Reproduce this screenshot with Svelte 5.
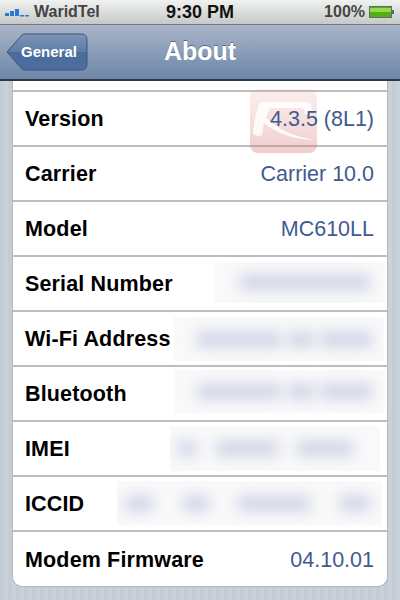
<script>
    const rows = [
        { label: 'Version', value: '4.3.5 (8L1)' },
        { label: 'Carrier', value: 'Carrier 10.0' },
        { label: 'Model', value: 'MC610LL' },
        { label: 'Serial Number', patch: 'serial', segs: [130] },
        { label: 'Wi-Fi Address', patch: 'wifi', segs: [84, 26, 52] },
        { label: 'Bluetooth', patch: 'bluetooth', segs: [84, 26, 52] },
        { label: 'IMEI', patch: 'imei', segs: [18, 62, 56] },
        { label: 'ICCID', patch: 'iccid', segs: [28, 26, 72, 30] },
        { label: 'Modem Firmware', value: '04.10.01' }
    ];
</script>

<div class="phone">
    <div class="status">
        <div class="carrier">
            <svg class="signal" width="26" height="10" viewBox="0 0 26 10">
                <rect x="0" y="6" width="4" height="3" fill="#2a78d8" />
                <rect x="5" y="4" width="4" height="5" fill="#2a78d8" />
                <rect x="10" y="2" width="4" height="7" fill="#2a78d8" />
                <rect x="15" y="8" width="4" height="1.5" fill="#2a78d8" />
                <rect x="20" y="8" width="4" height="1.5" fill="#2a78d8" />
            </svg>
            <span>WaridTel</span>
        </div>
        <div class="time">9:30 PM</div>
        <div class="battery">
            <span>100%</span>
            <svg width="26" height="12" viewBox="0 0 26 12">
                <rect x="0.5" y="0.5" width="22" height="11" fill="#ddd" stroke="#666" />
                <rect x="1" y="1" width="21" height="10" fill="#55ad18" />
                <rect x="1" y="2" width="21" height="4" fill="#8fdc4c" />
                <rect x="23" y="4" width="2" height="4" fill="#666" />
            </svg>
        </div>
    </div>

    <div class="nav">
        <div class="back">
            <svg class="back-shape" width="82" height="38" viewBox="0 0 82 38">
                <defs>
                    <linearGradient id="backfill" x1="0" y1="0" x2="0" y2="1">
                        <stop offset="0" stop-color="#7d96b8" />
                        <stop offset="0.5" stop-color="#5c7ca6" />
                        <stop offset="0.5" stop-color="#4a6c9c" />
                        <stop offset="1" stop-color="#4d6f9f" />
                    </linearGradient>
                </defs>
                <path d="M1 19 L16 2 Q17 1 19 1 L75 1 Q81 1 81 7 L81 31 Q81 37 75 37 L19 37 Q17 37 16 36 Z" fill="url(#backfill)" stroke="#3d5378" />
            </svg>
            <span>General</span>
        </div>
        <h1>About</h1>
    </div>

    <div class="content">
        <div class="card">
            <div class="stub"></div>
            {#each rows as row}
                <div class="row">
                    <span class="label">{row.label}</span>
                    {#if row.value}
                        <span class="value">{row.value}</span>
                    {/if}
                    {#if row.patch}
                        <div class="patch {row.patch}">
                            {#each row.segs as w}
                                <div class="smear" style="width: {w}px"></div>
                            {/each}
                        </div>
                    {/if}
                </div>
            {/each}
        </div>

        <div class="mark">
            <svg width="67" height="64" viewBox="0 0 67 64">
                <path d="M3 44 C4 32 6 22 10 13 L54 13 C62 13 64 18 60 25 L54 25 C56 21 54 19 50 19 L20 19 C18 23 17 26 16 29 C30 42 46 48 66 51 C44 51 26 44 14 34 C13 38 13 42 12 46 C8 48 5 47 3 44 Z" fill="#fff" opacity="0.85" />
            </svg>
        </div>
    </div>
</div>

<style>
    :global(body) {
        margin: 0;
    }

    .phone {
        width: 400px;
        height: 600px;
        overflow: hidden;
        font-family: "Liberation Sans", Arial, sans-serif;
        display: flex;
        flex-direction: column;
    }

    .status {
        height: 24px;
        flex: none;
        display: grid;
        grid-template-columns: 1fr auto 1fr;
        align-items: center;
        padding: 0 5px;
        background: linear-gradient(#f0f2f0, #c6c9c8);
        border-bottom: 1px solid #76797c;
        font-size: 16px;
        color: #444;
    }

    .carrier {
        display: flex;
        align-items: center;
        gap: 3px;
        font-weight: 700;
    }

    .time {
        color: #111;
        font-weight: 700;
        font-size: 18px;
    }

    .battery {
        display: flex;
        justify-content: flex-end;
        align-items: center;
        gap: 4px;
        font-weight: 700;
        font-size: 16px;
    }

    .nav {
        height: 52px;
        padding-bottom: 2px;
        flex: none;
        position: relative;
        display: flex;
        align-items: center;
        justify-content: center;
        background: linear-gradient(#a9b5c8, #6d86a8);
        border-bottom: 2px solid #2d3748;
    }

    .nav h1 {
        margin: 0;
        color: #fff;
        font-size: 25px;
        font-weight: 700;
        text-shadow: 0 -1px 0 rgba(50, 60, 80, 0.6);
    }

    .back {
        position: absolute;
        left: 6px;
        top: 8px;
        width: 82px;
        height: 38px;
    }

    .back-shape {
        display: block;
    }

    .back span {
        position: absolute;
        left: 10px;
        top: 0;
        width: 66px;
        line-height: 37px;
        text-align: center;
        color: #fff;
        font-size: 15px;
        font-weight: 700;
    }

    .content {
        flex: 1;
        position: relative;
        padding: 0 12px;
        background: repeating-linear-gradient(90deg, #c5ccd5 0 4px, #cad1da 4px 8px);
    }

    .card {
        background: #fff;
        border: 1px solid #b4b6b8;
        border-top: none;
        border-radius: 0 0 10px 10px;
    }

    .stub {
        height: 9px;
        border-bottom: 2px solid #bdbdbd;
    }

    .row {
        height: 51px;
        position: relative;
        display: flex;
        align-items: center;
        justify-content: space-between;
        padding: 2px 13px 0 12px;
        border-bottom: 2px solid #bdbdbd;
    }

    .row:last-child {
        height: 52px;
        border-bottom: none;
    }

    .label {
        color: #000;
        font-size: 21.5px;
        font-weight: 700;
        letter-spacing: 0.15px;
        position: relative;
        z-index: 3;
    }

    .value {
        color: #3f5a8f;
        font-size: 21.5px;
        position: relative;
        z-index: 3;
    }

    .patch {
        position: absolute;
        background: #f9f9fa;
        overflow: hidden;
        display: flex;
        align-items: center;
        justify-content: space-between;
        box-sizing: border-box;
    }

    .smear {
        height: 15px;
        background: #cdd4e4;
        filter: blur(7px);
    }

    .serial { left: 202px; right: 2px; top: 5px; height: 41px; padding: 0 15px 0 25px; }
    .wifi { left: 161px; right: 3px; top: 5px; height: 44px; padding: 0 12px 0 23px; }
    .bluetooth { left: 162px; right: 2px; top: 3px; height: 43px; padding: 0 13px 0 22px; }
    .imei { left: 157px; right: 7px; top: 4px; height: 45px; padding: 0 27px 0 8px; }
    .iccid { left: 104px; right: 5px; top: 4px; height: 44px; padding: 0 12px 0 8px; }

    .mark {
        position: absolute;
        left: 250px;
        top: 8px;
        width: 67px;
        height: 64px;
        z-index: 2;
        border-radius: 8px;
        background: linear-gradient(rgba(235, 170, 170, 0.18), rgba(214, 110, 110, 0.34));
    }

    .mark svg {
        display: block;
    }
</style>
